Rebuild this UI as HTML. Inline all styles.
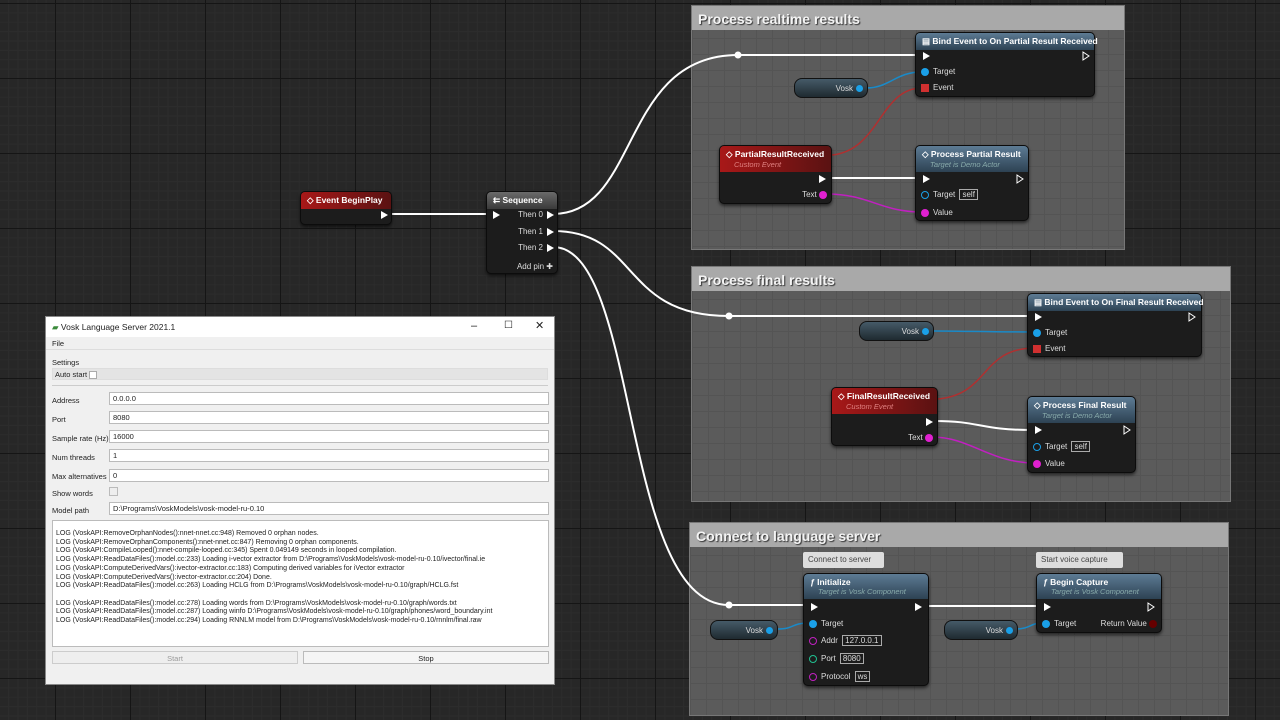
<!DOCTYPE html>
<html><head><meta charset="utf-8"><style>
*{box-sizing:border-box;margin:0;padding:0}
body{width:1280px;height:720px;overflow:hidden;position:relative;font-family:"Liberation Sans",sans-serif;
background-color:#272727;
background-image:linear-gradient(#151515 1px,transparent 1px),linear-gradient(90deg,#151515 1px,transparent 1px),linear-gradient(#2c2c2c 1px,transparent 1px),linear-gradient(90deg,#2c2c2c 1px,transparent 1px);
background-size:75px 75px,75px 75px,9.375px 9.375px,9.375px 9.375px;background-position:55px 3px,55px 3px,55px 3px,55px 3px}
.cm{position:absolute;background-color:#5b5b5b;border:1px solid #777;
background-image:linear-gradient(#545454 1px,transparent 1px),linear-gradient(90deg,#545454 1px,transparent 1px);background-size:16px 16px}
.cm .t{height:24px;background:#a9a9a9;color:#f4f4f4;font-weight:bold;font-size:14px;padding:5px 6px;text-shadow:1px 1px 1px #333}
.n{position:absolute;background:#1c1c1c;border:1px solid #0c0c0c;border-radius:5px;color:#ddd;font-size:8px;box-shadow:0 2px 3px rgba(0,0,0,.6)}
.h{border-radius:4px 4px 0 0;padding:3px 6px;font-weight:bold;color:#fff;font-size:8.5px;white-space:nowrap}
.hb{background:linear-gradient(#5d7b94,#2d4253)}
.hr{background:linear-gradient(90deg,#a81818,#5a1212)}
.hg{background:linear-gradient(#6a6a6a,#3a3a3a)}
.sub{font-weight:normal;font-style:italic;color:#8aa;font-size:7.5px;display:block;margin-left:8px}
.hr .sub{color:#e08080}
.p{position:absolute;font-size:8px;color:#ddd;white-space:nowrap}
.ex{position:absolute;width:0;height:0;border-left:7px solid #fff;border-top:4px solid transparent;border-bottom:4px solid transparent}
.exo{position:absolute;width:9px;height:10px}
.dot{display:inline-block;width:8px;height:8px;border-radius:50%;vertical-align:middle;margin-right:4px}
.box{border:1px solid #aaa;padding:0 2px;margin-left:2px}
.var{position:absolute;height:20px;border-radius:8px;background:linear-gradient(#455a68,#1f2a30);border:1px solid #111;color:#ddd;font-size:8px;text-align:right;padding:5px 14px 0 0}
.var:after{content:"";position:absolute;right:4px;top:6px;width:7px;height:7px;border-radius:50%;background:#1aa0e8}
.note{position:absolute;background:#ddd;color:#444;font-size:8px;padding:3px 5px;border-radius:2px;height:16px}
.win{position:absolute;left:45px;top:316px;width:510px;height:369px;background:#f0f0f0;border:1px solid #888;font-size:7.5px;color:#222}
.fld{position:absolute;left:63px;width:440px;height:13px;background:#fff;border:1px solid #bbb;padding:1px 3px}
.lbl{position:absolute;left:6px}
</style></head><body>

<div class="cm" style="left:691px;top:5px;width:434px;height:245px"><div class="t">Process realtime results</div></div>
<div class="cm" style="left:691px;top:266px;width:540px;height:236px"><div class="t">Process final results</div></div>
<div class="cm" style="left:689px;top:522px;width:540px;height:194px"><div class="t">Connect to language server</div></div>

<svg style="position:absolute;left:0;top:0" width="1280" height="720">
<g fill="none" stroke="#fff" stroke-width="2">
<path d="M390 214 L490 214"/>
<path d="M553 214 C640 214 620 55 738 55 L920 55"/>
<path d="M553 231 C640 231 620 316 729 316 L1032 316"/>
<path d="M553 247 C640 247 620 605 729 605 L808 605"/>
<path d="M826 178 L920 178"/>
<path d="M935 421 C980 421 980 430 1032 430"/>
<path d="M922 606 L1040 606"/>
</g>
<g fill="#fff"><circle cx="738" cy="55" r="3.5"/><circle cx="729" cy="316" r="3.5"/><circle cx="729" cy="605" r="3.5"/></g>
<g fill="none" stroke-width="1.5">
<path d="M866 88 C890 88 895 72 922 72" stroke="#1a8ac8"/>
<path d="M932 331 C960 331 990 332 1035 332" stroke="#1a8ac8"/>
<path d="M778 629 C795 629 790 623 810 623" stroke="#1a8ac8"/>
<path d="M1016 629 C1030 629 1030 623 1043 623" stroke="#1a8ac8"/>
<path d="M832 155 C880 150 880 88 922 88" stroke="#b03030"/>
<path d="M937 399 C990 395 980 348 1035 348" stroke="#b03030"/>
<path d="M826 194 C870 194 880 212 922 212" stroke="#c020c0"/>
<path d="M932 437 C970 437 990 463 1035 463" stroke="#c020c0"/>
</g>
</svg>

<div class="n" style="left:300px;top:191px;width:92px;height:34px"><div class="h hr">◇ Event BeginPlay</div><div class="ex" style="left:80px;top:19px"></div></div>
<div class="n" style="left:486px;top:191px;width:72px;height:83px"><div class="h hg">⇇ Sequence</div>
<div class="ex" style="left:6px;top:19px"></div>
<div class="p" style="right:14px;top:18px">Then 0</div><div class="ex" style="left:60px;top:19px"></div>
<div class="p" style="right:14px;top:35px">Then 1</div><div class="ex" style="left:60px;top:36px"></div>
<div class="p" style="right:14px;top:51px">Then 2</div><div class="ex" style="left:60px;top:52px"></div>
<div class="p" style="right:4px;top:70px">Add pin ✚</div></div>

<div class="n" style="left:915px;top:32px;width:180px;height:65px"><div class="h hb">▤ Bind Event to On Partial Result Received</div>
<div class="ex" style="left:7px;top:19px"></div><svg class="exo" style="left:166px;top:18px"><path d="M1 1 L7 5 L1 9Z" fill="none" stroke="#fff"/></svg>
<div class="p" style="left:5px;top:34px"><span class="dot" style="background:#1aa0e8"></span>Target</div>
<div class="p" style="left:5px;top:50px"><span class="dot" style="background:#d03030;border-radius:0"></span>Event</div></div>
<div class="var" style="left:794px;top:78px;width:74px">Vosk</div>
<div class="n" style="left:719px;top:145px;width:113px;height:59px"><div class="h hr">◇ PartialResultReceived<span class="sub">Custom Event</span></div>
<div class="ex" style="left:99px;top:29px"></div><div class="p" style="right:4px;top:44px">Text <span class="dot" style="background:#e020d0;margin:0"></span></div></div>
<div class="n" style="left:915px;top:145px;width:114px;height:76px"><div class="h hb">◇ Process Partial Result<span class="sub">Target is Demo Actor</span></div>
<div class="ex" style="left:7px;top:29px"></div><svg class="exo" style="left:100px;top:28px"><path d="M1 1 L7 5 L1 9Z" fill="none" stroke="#fff"/></svg>
<div class="p" style="left:5px;top:44px"><span class="dot" style="border:1.5px solid #1aa0e8"></span>Target <span class="box">self</span></div>
<div class="p" style="left:5px;top:62px"><span class="dot" style="background:#e020d0"></span>Value</div></div>

<div class="n" style="left:1027px;top:293px;width:175px;height:64px"><div class="h hb">▤ Bind Event to On Final Result Received</div>
<div class="ex" style="left:7px;top:19px"></div><svg class="exo" style="left:160px;top:18px"><path d="M1 1 L7 5 L1 9Z" fill="none" stroke="#fff"/></svg>
<div class="p" style="left:5px;top:34px"><span class="dot" style="background:#1aa0e8"></span>Target</div>
<div class="p" style="left:5px;top:50px"><span class="dot" style="background:#d03030;border-radius:0"></span>Event</div></div>
<div class="var" style="left:859px;top:321px;width:75px">Vosk</div>
<div class="n" style="left:831px;top:387px;width:107px;height:59px"><div class="h hr">◇ FinalResultReceived<span class="sub">Custom Event</span></div>
<div class="ex" style="left:94px;top:30px"></div><div class="p" style="right:4px;top:45px">Text <span class="dot" style="background:#e020d0;margin:0"></span></div></div>
<div class="n" style="left:1027px;top:396px;width:109px;height:77px"><div class="h hb">◇ Process Final Result<span class="sub">Target is Demo Actor</span></div>
<div class="ex" style="left:7px;top:29px"></div><svg class="exo" style="left:95px;top:28px"><path d="M1 1 L7 5 L1 9Z" fill="none" stroke="#fff"/></svg>
<div class="p" style="left:5px;top:45px"><span class="dot" style="border:1.5px solid #1aa0e8"></span>Target <span class="box">self</span></div>
<div class="p" style="left:5px;top:62px"><span class="dot" style="background:#e020d0"></span>Value</div></div>

<div class="note" style="left:803px;top:552px;width:81px">Connect to server</div>
<div class="note" style="left:1036px;top:552px;width:87px">Start voice capture</div>
<div class="n" style="left:803px;top:573px;width:126px;height:113px"><div class="h hb"><i>ƒ</i> Initialize<span class="sub">Target is Vosk Component</span></div>
<div class="ex" style="left:7px;top:29px"></div><div class="ex" style="left:111px;top:29px"></div>
<div class="p" style="left:5px;top:45px"><span class="dot" style="background:#1aa0e8"></span>Target</div>
<div class="p" style="left:5px;top:62px"><span class="dot" style="border:1.5px solid #c020c0"></span>Addr <span class="box">127.0.0.1</span></div>
<div class="p" style="left:5px;top:80px"><span class="dot" style="border:1.5px solid #20c090"></span>Port <span class="box">8080</span></div>
<div class="p" style="left:5px;top:98px"><span class="dot" style="border:1.5px solid #c020c0"></span>Protocol <span class="box">ws</span></div></div>
<div class="var" style="left:710px;top:620px;width:68px">Vosk</div>
<div class="var" style="left:944px;top:620px;width:74px">Vosk</div>
<div class="n" style="left:1036px;top:573px;width:126px;height:60px"><div class="h hb"><i>ƒ</i> Begin Capture<span class="sub">Target is Vosk Component</span></div>
<div class="ex" style="left:7px;top:29px"></div><svg class="exo" style="left:110px;top:28px"><path d="M1 1 L7 5 L1 9Z" fill="none" stroke="#fff"/></svg>
<div class="p" style="left:5px;top:45px"><span class="dot" style="background:#1aa0e8"></span>Target</div>
<div class="p" style="right:4px;top:45px">Return Value <span class="dot" style="background:#600;margin:0"></span></div></div>

<div class="win">
<div style="height:20px;background:#fff;font-size:8.5px;padding:5px 6px;position:relative"><span style="color:#3a8a3a">▰</span> Vosk Language Server 2021.1
<span style="position:absolute;left:425px;top:3px;font-size:11px">–</span><span style="position:absolute;left:458px;top:3px;font-size:10px">☐</span><span style="position:absolute;left:489px;top:2px;font-size:11px">✕</span></div>
<div style="height:13px;padding:2px 6px;border-bottom:1px solid #ddd">File</div>
<div class="lbl" style="top:41px">Settings</div>
<div style="position:absolute;left:6px;top:51px;width:496px;height:12px;background:#e4e4e4;border:1px solid #ddd;padding:1px 2px">Auto start <span style="display:inline-block;width:8px;height:8px;background:#fff;border:1px solid #aaa;vertical-align:middle"></span></div>
<div style="position:absolute;left:6px;top:68px;width:496px;border-top:1px solid #ccc"></div>
<div class="lbl" style="top:79px">Address</div><div class="fld" style="top:75px">0.0.0.0</div>
<div class="lbl" style="top:98px">Port</div><div class="fld" style="top:94px">8080</div>
<div class="lbl" style="top:117px">Sample rate (Hz)</div><div class="fld" style="top:113px">16000</div>
<div class="lbl" style="top:136px">Num threads</div><div class="fld" style="top:132px">1</div>
<div class="lbl" style="top:155px">Max alternatives</div><div class="fld" style="top:152px">0</div>
<div class="lbl" style="top:172px">Show words</div><div style="position:absolute;left:63px;top:170px;width:9px;height:9px;border:1px solid #bbb;background:#eee"></div>
<div class="lbl" style="top:189px">Model path</div><div class="fld" style="top:185px">D:\Programs\VoskModels\vosk-model-ru-0.10</div>
<div style="position:absolute;left:6px;top:203px;width:497px;height:127px;background:#fff;border:1px solid #bbb;padding:9px 3px;font-size:7px;line-height:8.7px;white-space:pre;overflow:hidden">LOG (VoskAPI:RemoveOrphanNodes():nnet-nnet.cc:948) Removed 0 orphan nodes.
LOG (VoskAPI:RemoveOrphanComponents():nnet-nnet.cc:847) Removing 0 orphan components.
LOG (VoskAPI:CompileLooped():nnet-compile-looped.cc:345) Spent 0.049149 seconds in looped compilation.
LOG (VoskAPI:ReadDataFiles():model.cc:233) Loading i-vector extractor from D:\Programs\VoskModels\vosk-model-ru-0.10/ivector/final.ie
LOG (VoskAPI:ComputeDerivedVars():ivector-extractor.cc:183) Computing derived variables for iVector extractor
LOG (VoskAPI:ComputeDerivedVars():ivector-extractor.cc:204) Done.
LOG (VoskAPI:ReadDataFiles():model.cc:263) Loading HCLG from D:\Programs\VoskModels\vosk-model-ru-0.10/graph/HCLG.fst

LOG (VoskAPI:ReadDataFiles():model.cc:278) Loading words from D:\Programs\VoskModels\vosk-model-ru-0.10/graph/words.txt
LOG (VoskAPI:ReadDataFiles():model.cc:287) Loading winfo D:\Programs\VoskModels\vosk-model-ru-0.10/graph/phones/word_boundary.int
LOG (VoskAPI:ReadDataFiles():model.cc:294) Loading RNNLM model from D:\Programs\VoskModels\vosk-model-ru-0.10/rnnlm/final.raw</div>
<div style="position:absolute;left:6px;top:334px;width:246px;height:13px;border:1px solid #ccc;background:#eee;color:#999;text-align:center;padding-top:2px">Start</div>
<div style="position:absolute;left:257px;top:334px;width:246px;height:13px;border:1px solid #bbb;background:#f5f5f5;text-align:center;padding-top:2px">Stop</div>
</div>
</body></html>
